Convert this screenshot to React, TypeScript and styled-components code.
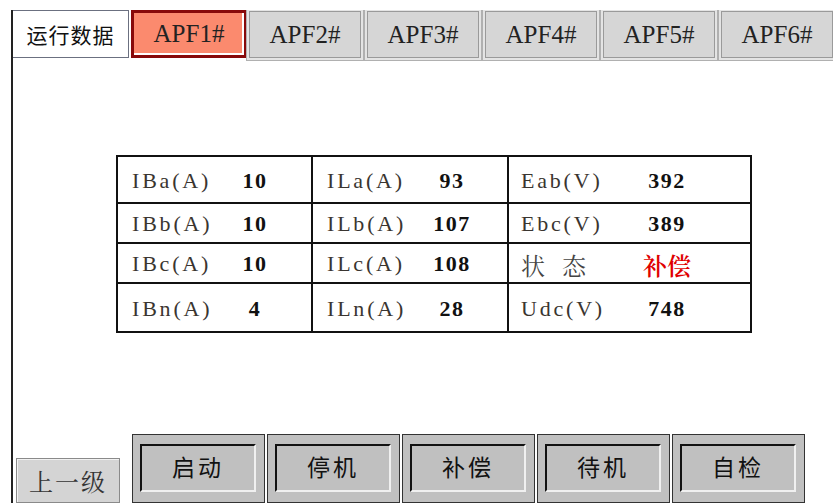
import styled, { createGlobalStyle } from "styled-components";

const SERIF = `"Liberation Serif", "Times New Roman", serif`;
const SONG = `"Noto Serif CJK SC", "Liberation Serif", serif`;
const CJK = `"Noto Sans CJK SC", "Noto Sans", sans-serif`;

const GlobalStyle = createGlobalStyle`
  html, body {
    margin: 0;
    padding: 0;
    background: #fff;
    overflow: hidden;
  }
  * {
    box-sizing: border-box;
  }
`;

const Frame = styled.div`
  margin: 10px 0 0 11px;
  height: 493px;
  width: 822px;
  border-left: 2px solid #222;
  display: flex;
  flex-direction: column;
  overflow: hidden;
`;

const TabBar = styled.div`
  height: 48px;
  display: flex;
  gap: 6px;
  flex-shrink: 0;
`;

const HomeTab = styled.div`
  width: 118px;
  margin-right: -4px;
  background: #fff;
  border: 1px solid #6b7080;
  border-left: none;
  display: flex;
  align-items: center;
  justify-content: center;
  font-family: ${CJK};
  font-size: 21px;
  color: #111;
  letter-spacing: 1px;
`;

const ApfTab = styled.div<{ $active?: boolean }>`
  width: ${(p) => (p.$active ? "116px" : "112px")};
  flex-shrink: 0;
  margin-right: ${(p) => (p.$active ? "-4px" : "0")};
  display: flex;
  align-items: center;
  justify-content: center;
  font-family: ${SERIF};
  font-size: 25px;
  color: #222;
  background: ${(p) => (p.$active ? "#fb8a6e" : "#d6d6d6")};
  border: ${(p) => (p.$active ? "3px solid #880a0a" : "1px solid #9a9a9a")};
  box-shadow: ${(p) =>
    p.$active
      ? "inset -2px -2px 0 #fff"
      : "0 0 0 2px #e4e4e4, 0 0 0 3px #b0b0b0"};
  margin-top: ${(p) => (p.$active ? "0" : "1px")};
`;

const Content = styled.div`
  flex: 1;
  padding: 97px 0 0 103px;
`;

const Grid = styled.div`
  width: 636px;
  display: grid;
  grid-template-columns: 195px 196px 241px;
  grid-template-rows: 47px 40px 40px 47px;
  border: 2px solid #111;
`;

const Cell = styled.div<{ $pad: number; $last?: boolean; $bottom?: boolean }>`
  display: flex;
  align-items: center;
  padding-left: ${(p) => p.$pad}px;
  padding-top: 2px;
  border-right: ${(p) => (p.$last ? "none" : "2px solid #111")};
  border-bottom: ${(p) => (p.$bottom ? "none" : "2px solid #111")};
`;

const Label = styled.span<{ $w: number }>`
  width: ${(p) => p.$w}px;
  font-family: ${SERIF};
  font-size: 22px;
  letter-spacing: 2.8px;
  color: #3a3530;
  white-space: pre;
`;

const CjkLabel = styled(Label)`
  font-family: ${SONG};
  font-size: 24px;
  letter-spacing: 17px;
  color: #444;
`;

const Value = styled.span<{ $w: number; $red?: boolean }>`
  width: ${(p) => p.$w}px;
  text-align: center;
  font-family: ${(p) => (p.$red ? SONG : SERIF)};
  font-weight: ${(p) => (p.$red ? 600 : 700)};
  font-size: ${(p) => (p.$red ? "24px" : "22px")};
  letter-spacing: ${(p) => (p.$red ? "0" : "1.5px")};
  color: ${(p) => (p.$red ? "#e00000" : "#111")};
`;

const BottomBar = styled.div`
  height: 69px;
  flex-shrink: 0;
  display: flex;
  align-items: flex-end;
  padding-left: 3px;
`;

const BackButton = styled.div`
  width: 104px;
  height: 45px;
  margin-right: 12px;
  background: #d4d4d4;
  border: 1px solid #8a8a8a;
  box-shadow: inset 1px 1px 0 #f2f2f2;
  display: flex;
  align-items: center;
  justify-content: center;
  font-family: ${SONG};
  font-size: 24px;
  color: #333;
  letter-spacing: 2px;
`;

const Buttons = styled.div`
  display: flex;
  gap: 2px;
`;

const CmdButton = styled.div`
  width: 133px;
  height: 69px;
  background: #c0c0c0;
  border: 1px solid #333;
  padding: 9px 8px 10px 7px;
`;

const CmdFace = styled.div`
  height: 100%;
  border-top: 2px solid #111;
  border-left: 2px solid #111;
  border-bottom: 2px solid #f0f0f0;
  border-right: 2px solid #f0f0f0;
  display: flex;
  align-items: center;
  justify-content: center;
  padding-bottom: 4px;
  font-family: ${CJK};
  font-size: 23px;
  color: #111;
  letter-spacing: 3px;
`;

type Entry = { label: string; value: string; cjk?: boolean; red?: boolean };

const rows: Entry[][] = [
  [
    { label: "IBa(A)", value: "10" },
    { label: "ILa(A)", value: "93" },
    { label: "Eab(V)", value: "392" },
  ],
  [
    { label: "IBb(A)", value: "10" },
    { label: "ILb(A)", value: "107" },
    { label: "Ebc(V)", value: "389" },
  ],
  [
    { label: "IBc(A)", value: "10" },
    { label: "ILc(A)", value: "108" },
    { label: "状态", value: "补偿", cjk: true, red: true },
  ],
  [
    { label: "IBn(A)", value: "4" },
    { label: "ILn(A)", value: "28" },
    { label: "Udc(V)", value: "748" },
  ],
];

// padding, label width, value width per column
const cols = [
  { pad: 14, label: 100, value: 46 },
  { pad: 14, label: 100, value: 50 },
  { pad: 12, label: 120, value: 52 },
];

const tabs = ["APF1#", "APF2#", "APF3#", "APF4#", "APF5#", "APF6#"];
const commands = ["启动", "停机", "补偿", "待机", "自检"];

export default function App() {
  return (
    <>
      <GlobalStyle />
      <Frame>
        <TabBar>
          <HomeTab>运行数据</HomeTab>
          {tabs.map((t, i) => (
            <ApfTab key={t} $active={i === 0}>
              {t}
            </ApfTab>
          ))}
        </TabBar>
        <Content>
          <Grid>
            {rows.map((row, r) =>
              row.map((e, c) => (
                <Cell
                  key={`${r}-${c}`}
                  $pad={cols[c].pad}
                  $last={c === 2}
                  $bottom={r === rows.length - 1}
                >
                  {e.cjk ? (
                    <CjkLabel $w={cols[c].label}>{e.label}</CjkLabel>
                  ) : (
                    <Label $w={cols[c].label}>{e.label}</Label>
                  )}
                  <Value $w={cols[c].value} $red={e.red}>
                    {e.value}
                  </Value>
                </Cell>
              ))
            )}
          </Grid>
        </Content>
        <BottomBar>
          <BackButton>上一级</BackButton>
          <Buttons>
            {commands.map((c) => (
              <CmdButton key={c}>
                <CmdFace>{c}</CmdFace>
              </CmdButton>
            ))}
          </Buttons>
        </BottomBar>
      </Frame>
    </>
  );
}
